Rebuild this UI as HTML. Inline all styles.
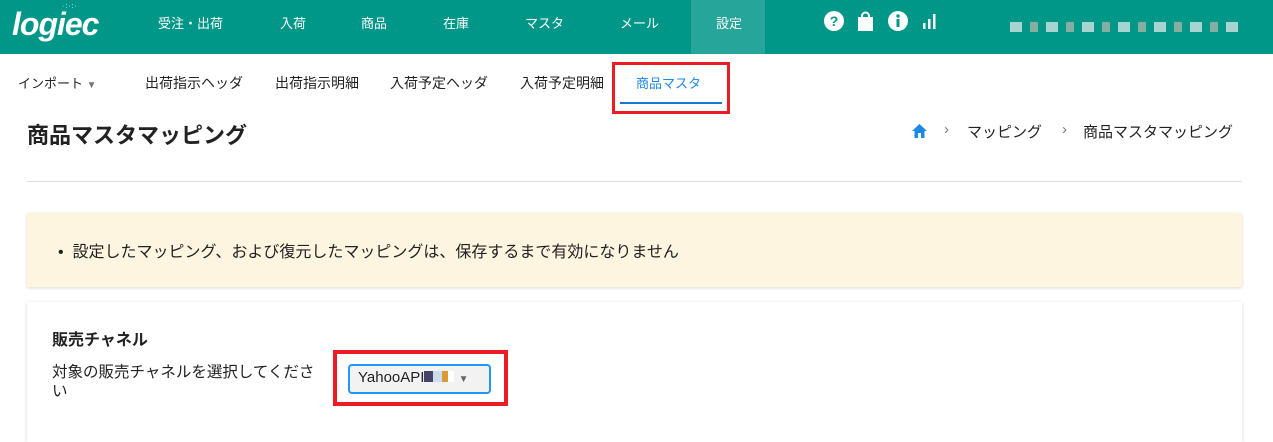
<!DOCTYPE html>
<html><head><meta charset="utf-8"><style>
*{box-sizing:border-box;margin:0;padding:0}
body{width:1273px;height:424px;overflow:hidden;background:#fff;font-family:"Liberation Sans","Noto Sans CJK JP",sans-serif;color:#333;position:relative}
.a{position:absolute;white-space:nowrap}
.hdr{position:absolute;left:0;top:0;width:1273px;height:54px;background:#009688}
.nav{color:#fff;font-size:13px;top:13px}
.sub{font-size:14px;top:73px;color:#222}
.bc{top:121px;font-size:15px;color:#222}
</style></head><body>
<div class="hdr"></div>
<div class="a" style="left:691px;top:0;width:74px;height:54px;background:#26a69a"></div>
<div class="a" style="left:12px;top:6px;color:#fff;font-size:32px;font-weight:bold;font-style:italic;letter-spacing:-1px">logiec</div>
<div class="a" style="left:62px;top:3px;color:#fff;font-size:7px;letter-spacing:1px">·:·:·</div>
<div class="a nav" style="left:158px">受注・出荷</div>
<div class="a nav" style="left:280px">入荷</div>
<div class="a nav" style="left:361px">商品</div>
<div class="a nav" style="left:443px">在庫</div>
<div class="a nav" style="left:525px">マスタ</div>
<div class="a nav" style="left:620px">メール</div>
<div class="a nav" style="left:716px">設定</div>
<svg class="a" style="left:824px;top:11px" width="120" height="22">
<circle cx="10" cy="10" r="10" fill="#fff"/><text x="10" y="15" font-size="14" font-weight="bold" text-anchor="middle" fill="#009688" font-family="Liberation Sans">?</text>
<path d="M34 6h15v14h-15z" fill="#fff"/><path d="M38 7v-2a3.5 3.5 0 0 1 7 0v2" stroke="#fff" stroke-width="2" fill="none"/>
<circle cx="74" cy="10" r="10" fill="#fff"/><rect x="72.5" y="8" width="3" height="8" fill="#009688"/><circle cx="74" cy="5" r="1.7" fill="#009688"/>
<rect x="99" y="12" width="2.5" height="6" fill="#fff"/><rect x="104" y="8" width="2.5" height="10" fill="#fff"/><rect x="109" y="3" width="2.5" height="15" fill="#fff"/>
</svg>
<div class="a" style="left:1010px;top:22px;width:235px;height:10px;background:repeating-linear-gradient(90deg,#eee 0 12px,transparent 12px 20px,#bba 20px 28px,transparent 28px 36px);opacity:.7"></div>
<div class="a sub" style="left:18px;top:73px;font-size:13px">インポート <span style="color:#777;font-size:10px">▼</span></div>
<div class="a sub" style="left:145px">出荷指示ヘッダ</div>
<div class="a sub" style="left:275px">出荷指示明細</div>
<div class="a sub" style="left:390px">入荷予定ヘッダ</div>
<div class="a sub" style="left:520px">入荷予定明細</div>
<div class="a sub" style="left:636px;color:#1e88e5;font-size:13px">商品マスタ</div>
<div class="a" style="left:620px;top:102px;width:102px;height:2px;background:#1976d2"></div>
<div class="a" style="left:612px;top:62px;width:118px;height:52px;border:3px solid #ed1c24"></div>
<div class="a" style="left:27px;top:118px;font-size:22px;font-weight:bold;color:#222">商品マスタマッピング</div>
<svg class="a" style="left:911px;top:123px" width="18" height="16"><path d="M1 8L8.5 1 16 8h-2.5v7h-3.5v-5h-3v5h-3.5v-7z" fill="#1e88e5"/></svg>
<div class="a bc" style="left:944px;color:#777">›</div>
<div class="a bc" style="left:967px">マッピング</div>
<div class="a bc" style="left:1062px;color:#777">›</div>
<div class="a bc" style="left:1083px">商品マスタマッピング</div>
<div class="a" style="left:27px;top:181px;width:1215px;height:1px;background:#ddd"></div>
<div class="a" style="left:27px;top:213px;width:1215px;height:74px;background:#fdf5df;box-shadow:0 1px 3px rgba(0,0,0,.15)"></div>
<div class="a" style="left:58px;top:238px;font-size:16px;color:#222">•&nbsp;&nbsp;設定したマッピング、および復元したマッピングは、保存するまで有効になりません</div>
<div class="a" style="left:27px;top:302px;width:1215px;height:140px;background:#fff;box-shadow:0 1px 4px rgba(0,0,0,.15)"></div>
<div class="a" style="left:52px;top:326px;font-size:16px;font-weight:bold;color:#222">販売チャネル</div>
<div class="a" style="left:52px;top:363px;font-size:15.5px;color:#222;line-height:19px">対象の販売チャネルを選択してくださ<br>い</div>
<div class="a" style="left:348px;top:364px;width:143px;height:30px;border:2px solid #2196f3;border-radius:4px;background:#f2f2f2"></div>
<div class="a" style="left:358px;top:369px;font-size:15px;color:#222">YahooAPI<span style="display:inline-block;width:30px;height:11px;background:linear-gradient(90deg,#446 0 30%,#cde 30% 60%,#d93 60% 80%,#fff 80%)"></span> <span style="color:#666;font-size:10px">▼</span></div>
<div class="a" style="left:333px;top:350px;width:175px;height:56px;border:4px solid #ed1c24"></div>
</body></html>
